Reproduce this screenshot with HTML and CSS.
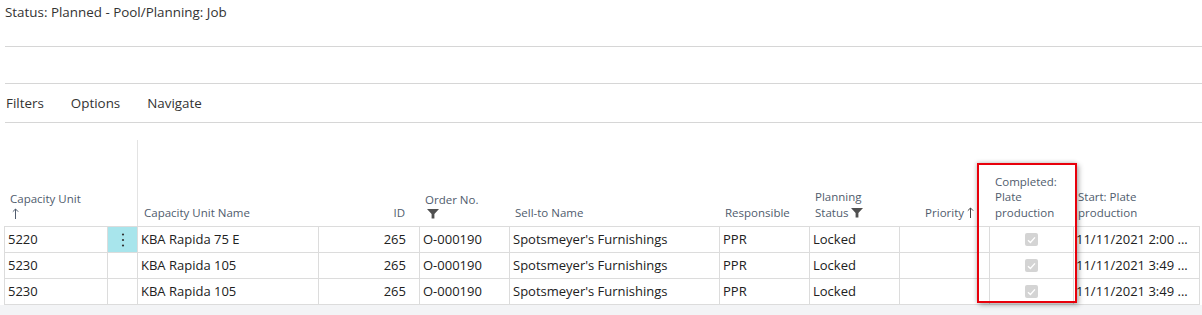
FILE: index.html
```html
<!DOCTYPE html>
<html>
<head>
<meta charset="utf-8">
<link rel="stylesheet" href="styles.css">
</head>
<body>
<div class="page">
  <div class="title">Status: Planned - Pool/Planning: Job</div>
  <div class="spacer"></div>
  <div class="actions">
    <span class="action">Filters</span>
    <span class="action">Options</span>
    <span class="action">Navigate</span>
  </div>
</div>
<div class="grid-wrap">
  <div class="row head">
    <div class="hc"><span>Capacity Unit</span><svg class="arrow" width="7" height="11" viewBox="0 0 7 11"><path d="M3.5 1V11M0.8 3.7L3.5 1L6.2 3.7" stroke="#505c6d" stroke-width="1" fill="none"/></svg></div>
    <div class="hc sep-none"></div>
    <div class="hc frozen"><span>Capacity Unit Name</span></div>
    <div class="hc right"><span>ID</span></div>
    <div class="hc"><span>Order No.</span><svg class="funnel" width="12" height="10" viewBox="0 0 12 10"><path d="M0 0H12L7.4 5V9.5H4.6V5Z" fill="#505050"/></svg></div>
    <div class="hc"><span>Sell-to Name</span></div>
    <div class="hc"><span>Responsible</span></div>
    <div class="hc"><span>Planning</span><span>Status <svg class="funnel inl" width="12" height="10" viewBox="0 0 12 10"><path d="M0 0H12L7.4 5V9.5H4.6V5Z" fill="#505050"/></svg></span></div>
    <div class="hc right"><span>Priority <svg class="arrow2" width="7" height="11" viewBox="0 0 7 11"><path d="M3.5 1V11M0.8 3.7L3.5 1L6.2 3.7" stroke="#444" stroke-width="1" fill="none"/></svg></span></div>
    <div class="hc"><span>Completed:</span><span>Plate</span><span>production</span></div>
    <div class="hc start"><span>Start: Plate</span><span>production</span></div>
  </div>
  <div class="row">
    <div class="c">5220</div>
    <div class="c dots sel"><svg width="4" height="16" viewBox="0 0 4 16"><circle cx="2" cy="2.5" r="1.1" fill="#333"/><circle cx="2" cy="8" r="1.1" fill="#333"/><circle cx="2" cy="13.5" r="1.1" fill="#333"/></svg></div>
    <div class="c">KBA Rapida 75 E</div>
    <div class="c right">265</div>
    <div class="c">O-000190</div>
    <div class="c">Spotsmeyer's Furnishings</div>
    <div class="c">PPR</div>
    <div class="c">Locked</div>
    <div class="c"></div>
    <div class="c center"><span class="chk"><svg width="9" height="8" viewBox="0 0 9 8"><path d="M1 4.2L3.4 6.4L8 1.4" stroke="#fff" stroke-width="1.4" fill="none"/></svg></span></div>
    <div class="c last">11/11/2021 2:00 ...</div>
  </div>
  <div class="row">
    <div class="c">5230</div>
    <div class="c dots"></div>
    <div class="c">KBA Rapida 105</div>
    <div class="c right">265</div>
    <div class="c">O-000190</div>
    <div class="c">Spotsmeyer's Furnishings</div>
    <div class="c">PPR</div>
    <div class="c">Locked</div>
    <div class="c"></div>
    <div class="c center"><span class="chk"><svg width="9" height="8" viewBox="0 0 9 8"><path d="M1 4.2L3.4 6.4L8 1.4" stroke="#fff" stroke-width="1.4" fill="none"/></svg></span></div>
    <div class="c last">11/11/2021 3:49 ...</div>
  </div>
  <div class="row">
    <div class="c">5230</div>
    <div class="c dots"></div>
    <div class="c">KBA Rapida 105</div>
    <div class="c right">265</div>
    <div class="c">O-000190</div>
    <div class="c">Spotsmeyer's Furnishings</div>
    <div class="c">PPR</div>
    <div class="c">Locked</div>
    <div class="c"></div>
    <div class="c center"><span class="chk"><svg width="9" height="8" viewBox="0 0 9 8"><path d="M1 4.2L3.4 6.4L8 1.4" stroke="#fff" stroke-width="1.4" fill="none"/></svg></span></div>
    <div class="c last">11/11/2021 3:49 ...</div>
  </div>
  <div class="highlight"></div>
</div>
<div class="footer"></div>
</body>
</html>
```

FILE: styles.css
```css
html, body {
  margin: 0;
  padding: 0;
  background: #fff;
  font-family: "Open Sans", "Noto Sans", sans-serif;
  color: #212121;
}
.page {
  margin-left: 5px;
}
.title {
  height: 47px;
  box-sizing: border-box;
  padding-top: 2px;
  line-height: 20px;
  font-size: 13.4px;
  color: #333;
  border-bottom: 1px solid #d6d6d6;
}
.spacer {
  height: 36px;
  border-bottom: 1px solid #d6d6d6;
}
.actions {
  height: 38px;
  display: flex;
  align-items: center;
  gap: 27px;
  padding-left: 1px;
  font-size: 13.4px;
  color: #333;
  border-bottom: 1px solid #d6d6d6;
}
.grid-wrap {
  position: relative;
  margin-top: 17px;
  margin-left: 4px;
  width: 1196px;
}
.row {
  display: grid;
  grid-template-columns: 103px 30px 181px 101px 90px 210px 90px 90px 90px 84px 127px;
}
.row.head {
  height: 87px;
  border-bottom: 1px solid #dcdcdc;
  box-sizing: border-box;
}
.hc {
  display: flex;
  flex-direction: column;
  justify-content: flex-end;
  padding: 0 6px 6px 6px;
  font-size: 11.5px;
  line-height: 15.5px;
  color: #505c6d;
  box-sizing: border-box;
}
.hc:first-child { padding-bottom: 7px; }
.hc.frozen {
  border-left: 1px solid #e3e3e3;
}
.hc.right {
  align-items: flex-end;
  padding-right: 14px;
}
.hc:nth-child(9) { padding-right: 15px; }
.hc.start { padding-left: 5px; }
.arrow { display: block; margin: 2px 0 0 2px; }
.arrow2 { display: inline-block; vertical-align: -1px; }
.funnel { display: block; margin: 2px 0 1px 2px; }
.funnel.inl { display: inline-block; margin: 0; vertical-align: -1px; }
.c {
  height: 26px;
  box-sizing: border-box;
  border-left: 1px solid #dcdcdc;
  border-bottom: 1px solid #dcdcdc;
  padding: 0 3px;
  font-size: 13px;
  line-height: 25px;
  white-space: nowrap;
  overflow: hidden;
}
.c.last { border-right: 1px solid #dcdcdc; padding-left: 2px; }
.c.right { text-align: right; padding-right: 13px; }
.c.center { display: flex; align-items: center; justify-content: center; }
.c.dots { display: flex; align-items: center; justify-content: center; }
.c.sel { background: #a8e5ec; }
.chk {
  width: 13px;
  height: 13px;
  border-radius: 2px;
  background: #d4d4d4;
  display: flex;
  align-items: center;
  justify-content: center;
}
.highlight {
  position: absolute;
  left: 973px;
  top: 23px;
  width: 100px;
  height: 140px;
  box-sizing: border-box;
  border: 2px solid #e8000b;
  box-shadow: 2px 2px 5px rgba(0,0,0,0.3), -1px -1px 4px rgba(0,0,0,0.15);
}
.footer {
  height: 20px;
  background: #f3f4f6;
}
```
